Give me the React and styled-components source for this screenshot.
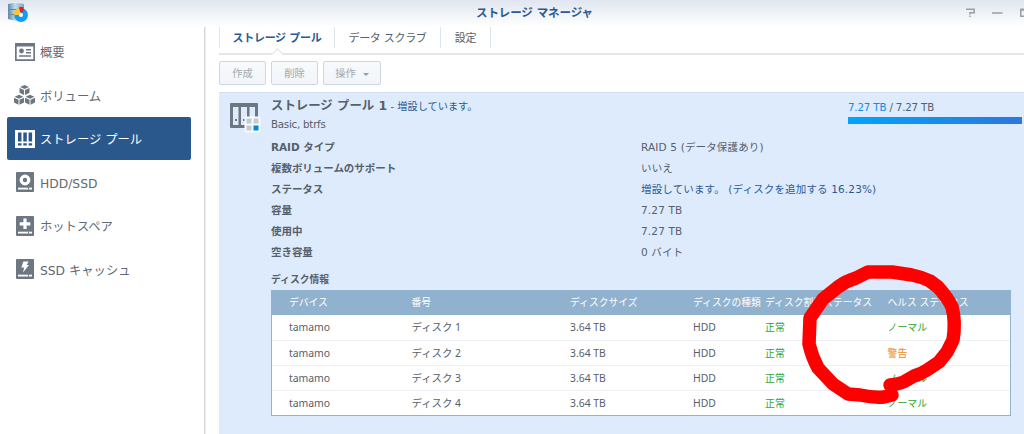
import styled, { createGlobalStyle, css } from "styled-components";

const navItems = [
  { icon: "overview", label: "概要" },
  { icon: "volume", label: "ボリューム" },
  { icon: "pool", label: "ストレージ プール", active: true },
  { icon: "hdd", label: "HDD/SSD" },
  { icon: "spare", label: "ホットスペア" },
  { icon: "cache", label: "SSD キャッシュ" },
];

const details = [
  { name: "RAID タイプ", value: "RAID 5 (データ保護あり)" },
  { name: "複数ボリュームのサポート", value: "いいえ" },
  {
    name: "ステータス",
    value: "増設しています。 (ディスクを追加する 16.23%)",
    link: true,
  },
  { name: "容量", value: "7.27 TB" },
  { name: "使用中", value: "7.27 TB" },
  { name: "空き容量", value: "0 バイト" },
];

const disks = [
  { number: "ディスク 1", health: "ノーマル" },
  { number: "ディスク 2", health: "警告", warning: true },
  { number: "ディスク 3", health: "ノーマル" },
  { number: "ディスク 4", health: "ノーマル" },
];

function Drive({ children }) {
  return (
    <svg width="18" height="20" viewBox="0 0 18 20">
      <rect width="18" height="20" rx="1" fill="#6d7781" />
      {children}
      <rect x="2" y="15.7" width="14" height="1.8" fill="#fff" />
      <rect x="12" y="15.5" width="1" height="2" fill="#6d7781" />
    </svg>
  );
}

function Cube({ x, y }) {
  return (
    <g transform={`translate(${x} ${y})`}>
      <path d="M5 0 9.4 2 5 4 .6 2Z" />
      <path d="M0 3 4.5 5V10L0 7.8Z" />
      <path d="M10 3 5.5 5V10L10 7.8Z" />
    </g>
  );
}

function NavIcon({ name }) {
  switch (name) {
    case "overview":
      return (
        <svg width="20" height="18" viewBox="0 0 20 18">
          <path
            d="M0 0H20V18H0ZM1.7 3.5V16.3H18.3V3.5Z"
            fill="#6d7781"
            fillRule="evenodd"
          />
          <circle cx="6.5" cy="8" r="2.4" fill="#6d7781" />
          <path
            d="M11 6.8H16M11 9.8H16M4 13H16"
            stroke="#6d7781"
            strokeWidth="1.4"
          />
        </svg>
      );
    case "volume":
      return (
        <svg width="21" height="20" viewBox="0 0 21 20" fill="#6d7781">
          <Cube x={5.5} y={0} />
          <Cube x={0} y={9.8} />
          <Cube x={11} y={9.8} />
        </svg>
      );
    case "pool":
      return (
        <svg width="20" height="18" viewBox="0 0 20 18">
          <rect width="20" height="18" fill="#fff" />
          <path
            d="M3 2.5H6.5V11.5H3ZM8.3 2.5H11.8V11.5H8.3ZM13.6 2.5H17.1V11.5H13.6ZM3 13.2H6.5V15.5H3ZM8.3 13.2H11.8V15.5H8.3ZM13.6 13.2H17.1V15.5H13.6Z"
            fill="#2a588c"
          />
        </svg>
      );
    case "hdd":
      return (
        <Drive>
          <circle cx="9" cy="8" r="3.8" fill="none" stroke="#fff" strokeWidth="3.2" />
        </Drive>
      );
    case "spare":
      return (
        <Drive>
          <path d="M9 2.5V13M3.7 7.8H14.3" stroke="#fff" strokeWidth="3.2" />
        </Drive>
      );
    default:
      return (
        <Drive>
          <path d="M7.4 2.5H12.6L10.7 6H13L7 13.5 8.2 8.5H5.3Z" fill="#fff" />
        </Drive>
      );
  }
}

function AppLogo() {
  return (
    <svg width="20" height="20" viewBox="0 0 20 20">
      <defs>
        <linearGradient id="rack">
          <stop offset="0" stopColor="#5f88a5" />
          <stop offset=".45" stopColor="#c5dbea" />
          <stop offset="1" stopColor="#84a4bb" />
        </linearGradient>
      </defs>
      <path d="M0 1Q8 -1 16 1V17Q8 19 0 16Z" fill="url(#rack)" />
      <path d="M1 6.5H14M1 11.5H14" stroke="#67889f" />
      <circle cx="13" cy="12" r="4.5" fill="none" stroke="#139cf4" strokeWidth="4.8" />
      <path d="M6 12A7 7 0 0 1 11 5L13 10.2 10.5 12Z" fill="#ffc72c" />
      <path d="M11 4H15.5V8.6L12.3 9.5Z" fill="#e62032" />
      <circle cx="13" cy="12" r="2" fill="#edf7fe" />
    </svg>
  );
}

function PoolIcon() {
  return (
    <svg width="31" height="30" viewBox="0 0 31 30">
      <path
        d="M1 0H27Q28 0 28 1V25H1Q0 25 0 24V1Q0 0 1 0ZM3 4V22H8.5V4ZM11 4V22H17V4ZM19.5 4V22H25V4Z"
        fill="#6d7781"
        fillRule="evenodd"
      />
      <path d="M5 17H7M13 17H15" stroke="#6d7781" strokeWidth="2" />
      <rect x="14.5" y="13.5" width="16" height="16" rx="1" fill="#f8fafc" />
      <path d="M16.5 15.5h5v5h-5zM23.5 15.5h5v5h-5zM16.5 22.5h5v5h-5z" fill="#c3ccd6" />
      <path d="M23.5 22.5h5v5h-5z" fill="#0086e5" />
    </svg>
  );
}

export default function App() {
  return (
    <>
      <GlobalStyle />
      <Window>
        <TitleBar>
          <AppLogo />
          <WindowTitle>ストレージ マネージャ</WindowTitle>
          <WindowControls>
            <svg width="60" height="10" viewBox="0 0 60 10" fill="none" stroke="#9a9fa6" strokeWidth="1.5">
              <path d="M2 1.2H10.2V4.7H6V6.5M6 7.5V9M28 5H38.5M60 1.3H56.8V8.3H60M57 2H60" />
            </svg>
          </WindowControls>
        </TitleBar>

        <Body>
          <Sidebar>
            {navItems.map(({ icon, label, active }) => (
              <NavItem key={icon} $active={active}>
                <IconSlot>
                  <NavIcon name={icon} />
                </IconSlot>
                <NavLabel>{label}</NavLabel>
              </NavItem>
            ))}
          </Sidebar>

          <Content>
            <Tabs>
              <Tab $width={116} $active>
                ストレージ プール
              </Tab>
              <Tab $width={106}>データ スクラブ</Tab>
              <Tab $width={50}>設定</Tab>
            </Tabs>
            <Toolbar>
              <Button $width={47}>作成</Button>
              <Button $width={47}>削除</Button>
              <Button $width={58}>
                操作
                <Caret />
              </Button>
            </Toolbar>

            <Panel>
              <PanelHeader>
                <PoolIcon />
                <Heading>
                  <PoolName>
                    ストレージ プール 1<PoolState> - <b>増設しています。</b></PoolState>
                  </PoolName>
                  <PoolType>Basic, btrfs</PoolType>
                </Heading>
                <Usage>
                  <UsageText>
                    <b>7.27 TB</b> / 7.27 TB
                  </UsageText>
                  <UsageBar />
                </Usage>
              </PanelHeader>

              <Details>
                {details.map(({ name, value, link }) => (
                  <DetailRow key={name}>
                    <DetailName>{name}</DetailName>
                    <DetailValue $link={link}>{value}</DetailValue>
                  </DetailRow>
                ))}
              </Details>

              <SectionTitle>ディスク情報</SectionTitle>
              <DiskTable>
                <HeadRow>
                  <span>デバイス</span>
                  <span>番号</span>
                  <span>ディスクサイズ</span>
                  <span>ディスクの種類</span>
                  <span>ディスク割当ステータス</span>
                  <span>ヘルス ステータス</span>
                </HeadRow>
                {disks.map(({ number, health, warning }) => (
                  <DiskRow key={number}>
                    <span>tamamo</span>
                    <span>{number}</span>
                    <span>3.64 TB</span>
                    <span>HDD</span>
                    <Status>正常</Status>
                    <Status $warning={warning}>{health}</Status>
                  </DiskRow>
                ))}
              </DiskTable>
            </Panel>
          </Content>
        </Body>

        <Marker viewBox="0 0 1024 434">
          <path d="M890 385 Q901 384 907 380 L914 376 Q921 374 927 370 L939 362 L947 352 L953 340 Q956 322 952 307 Q948 298 938 287 L930 281 Q922 277 912 275 L892 272 L868 272 L856 278 Q846 281 838 287 L823 299 L810 318 L809 344 Q812 357 818 368 L833 384 L848 394 L860 395 Q874 398 884 397 L892 395" />
        </Marker>
      </Window>
    </>
  );
}

const GlobalStyle = createGlobalStyle`
  * {
    box-sizing: border-box;
  }

  body {
    margin: 0;
    overflow: hidden;
    background: #fff;
  }
`;

const Window = styled.div`
  position: relative;
  display: flex;
  flex-direction: column;
  width: 1024px;
  height: 434px;
  overflow: hidden;
  color: #56606a;
  font: 10.5px/1 "DejaVu Sans", "Noto Sans CJK JP", sans-serif;
  white-space: nowrap;
`;

const TitleBar = styled.header`
  display: flex;
  flex: none;
  height: 27px;
  padding: 3px 0 0 8px;
  background: linear-gradient(#e0e6f0, #fff);
`;

const WindowTitle = styled.h1`
  flex: 1;
  margin: 0;
  padding-left: 448px;
  color: #2b5a93;
  font-size: 11.5px;
  font-weight: bold;
  line-height: 21px;
  letter-spacing: -0.1px;
`;

const WindowControls = styled.div`
  display: flex;
  padding-top: 5px;
`;

const Body = styled.div`
  display: flex;
  flex: 1;
  min-height: 0;
`;

const Sidebar = styled.nav`
  display: flex;
  flex: none;
  flex-direction: column;
  gap: 0.5px;
  width: 205px;
  padding: 3px 13px 0 7px;
  border-right: 1px solid #d7d7d7;
  box-shadow: 1px 0 1px #f0f0f0;
`;

const NavItem = styled.a`
  display: flex;
  flex: none;
  align-items: center;
  height: 43px;
  border-radius: 2px;
  color: #606a74;
  font-size: 12.3px;

  ${({ $active }) =>
    $active &&
    css`
      background: #2a588c;
      color: #fff;
    `}
`;

const NavLabel = styled.span`
  padding-top: 4px;
`;

const IconSlot = styled.span`
  display: flex;
  justify-content: center;
  width: 21px;
  margin: 0 5px 0 7px;
`;

const Content = styled.main`
  flex: 1;
  min-width: 0;
  padding-left: 14px;
`;

const Tabs = styled.div`
  display: flex;
  height: 28px;
  border-bottom: 2px solid #e6e6e6;
`;

const Tab = styled.div`
  position: relative;
  width: ${({ $width }) => $width}px;
  height: 21px;
  border-right: 1px solid #dde6ed;
  font-size: 11px;
  line-height: 23px;
  text-align: center;
  letter-spacing: -0.3px;

  &:first-child {
    border-left: 1px solid #dde6ed;
  }

  ${({ $active }) =>
    $active &&
    css`
      color: #2b5a93;
      font-weight: bold;

      &::after {
        content: "";
        position: absolute;
        top: 23px;
        left: 53px;
        width: 8px;
        height: 8px;
        border: solid #e0e0e0;
        border-width: 1px 0 0 1px;
        background: #fff;
        transform: rotate(45deg);
      }
    `}
`;

const Toolbar = styled.div`
  display: flex;
  position: relative;
  gap: 5px;
  height: 37px;
  padding-top: 6px;
  background: #fff;
`;

const Button = styled.button`
  display: flex;
  align-items: center;
  justify-content: center;
  width: ${({ $width }) => $width}px;
  height: 24px;
  padding: 0;
  border: 1px solid #cdd8e2;
  border-radius: 2px;
  background: linear-gradient(#f8fafc, #f1f5f9);
  color: #a1a8ae;
  font: 10.3px/1 "Noto Sans CJK JP", sans-serif;
`;

const Caret = styled.i`
  margin: 2px 0 0 7px;
  border: solid transparent;
  border-width: 3px 3px 0;
  border-top-color: #949da6;
`;

const Panel = styled.section`
  height: 342px;
  border-top: 1px solid #d1deed;
  background: #deebfc;
`;

const PanelHeader = styled.div`
  display: flex;
  height: 44px;
  padding: 10px 0 0 11px;
`;

const Heading = styled.div`
  flex: 1;
  margin: -6px 0 0 10px;
`;

const PoolName = styled.h2`
  margin: 0;
  font-size: 12.4px;
  font-weight: bold;
  line-height: 17px;
`;

const PoolState = styled.span`
  font-size: 10.2px;
  font-weight: normal;

  b {
    color: #2b5a93;
    font-weight: normal;
  }
`;

const PoolType = styled.div`
  font-size: 10.3px;
  line-height: 18px;
  letter-spacing: -0.25px;
`;

const Usage = styled.div`
  width: 176px;
  margin-top: -4px;
`;

const UsageText = styled.div`
  line-height: 16px;
  font-size: 10.3px;
  letter-spacing: -0.18px;

  b {
    color: #1689e5;
    font-weight: normal;
  }
`;

const UsageBar = styled.div`
  width: 174px;
  height: 7px;
  margin-top: 2px;
  background: linear-gradient(90deg, #00a5fc, #2c77df);
`;

const Details = styled.dl`
  margin: 0 0 0 52px;
`;

const DetailRow = styled.div`
  display: flex;
  height: 21px;
  line-height: 21px;
`;

const DetailName = styled.dt`
  width: 370px;
  font-weight: bold;
  letter-spacing: -0.05px;
`;

const DetailValue = styled.dd`
  margin: 0;
  color: ${({ $link }) => ($link ? "#2b5a93" : "inherit")};
  letter-spacing: 0.15px;
`;

const SectionTitle = styled.h3`
  margin: 7px 0 0 52px;
  font-size: 9.8px;
  line-height: 20px;
  font-weight: bold;
`;

const DiskTable = styled.div`
  width: 740px;
  height: 126px;
  margin-left: 52px;
  border: 1px solid #91b3cf;
  background: #fff;
  font: 10.5px/24px "Noto Sans", "Noto Sans CJK JP", sans-serif;
`;

const HeadRow = styled.div`
  display: grid;
  grid-template-columns: 122.5px 158.5px 123px 72px 122.5px 1fr;
  height: 24px;
  padding-left: 17px;
  background: #91b2ce;
  color: #fff;
  font-size: 9.8px;
`;

const DiskRow = styled(HeadRow)`
  height: 25px;
  background: #fff;
  color: #56606a;
  font-size: 10.4px;

  & + & {
    border-top: 1px solid #edf0f4;
  }
`;

const Status = styled.span`
  color: ${({ $warning }) => ($warning ? "#f18a20" : "#34a52f")};
  font-size: 9.9px;
`;

const Marker = styled.svg`
  position: absolute;
  inset: 0;
  width: 1024px;
  height: 434px;
  fill: none;
  stroke: #f00;
  stroke-width: 13.5px;
  stroke-linecap: round;
  stroke-linejoin: round;
  pointer-events: none;
`;
